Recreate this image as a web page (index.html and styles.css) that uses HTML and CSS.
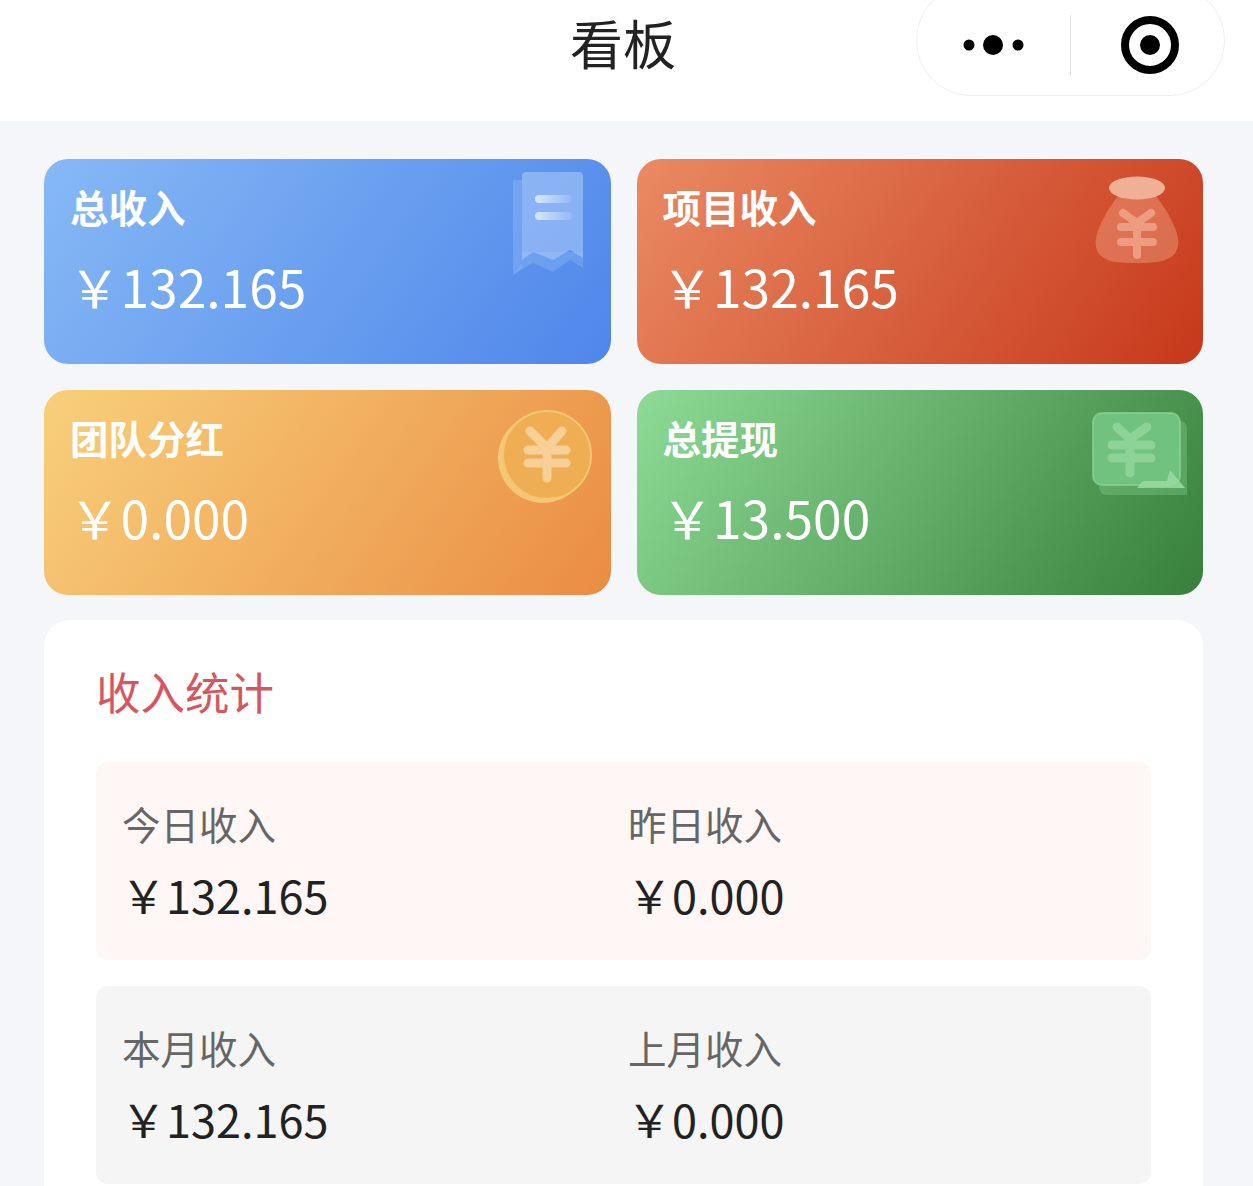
FILE: index.html
```html
<!DOCTYPE html>
<html lang="zh-CN">
<head>
    <meta charset="UTF-8">
    <meta name="viewport" content="width=device-width, initial-scale=1.0">
    <title>看板</title>
    <link rel="stylesheet" href="styles.css">
</head>
<body>

    <div class="header">
        <h1 class="page-title">看板</h1>
        <div class="capsule">
            <div class="capsule-btn">
                <svg width="62" height="24" viewBox="0 0 62 24"><circle cx="6" cy="12" r="5.5" fill="#000"/><circle cx="30" cy="12" r="10" fill="#000"/><circle cx="55" cy="12" r="5.5" fill="#000"/></svg>
            </div>
            <div class="capsule-btn">
                <svg width="58" height="58" viewBox="0 0 58 58"><circle cx="29" cy="29" r="25" fill="none" stroke="#000" stroke-width="8"/><circle cx="29" cy="29" r="10" fill="#000"/></svg>
            </div>
        </div>
    </div>

    <div class="cards">
        <div class="card card-blue">
            <p class="card-title">总收入</p>
            <p class="card-value">&#xFFE5;132.165</p>
            <svg class="card-icon icon-bill" width="72" height="106" viewBox="0 0 72 106">
                <defs>
                    <linearGradient id="billLine">
                        <stop offset="0" stop-color="#e8effd" stop-opacity=".85"/>
                        <stop offset="1" stop-color="#e8effd" stop-opacity=".1"/>
                    </linearGradient>
                </defs>
                <path d="M0 8H9V96L0 103Z" fill="#a4c9f9" fill-opacity=".3"/>
                <path d="M0 103L20 91L40 100L57 88L70 96V80H9V92Z" fill="#8fbcf6" fill-opacity=".35"/>
                <path d="M9 4Q9 0 13 0H66Q70 0 70 4V86L57 78L40 88L20 80L9 88Z" fill="#a6c8f8" fill-opacity=".6"/>
                <rect x="22" y="23" width="37" height="8" rx="4" fill="url(#billLine)"/>
                <rect x="22" y="40" width="37" height="8" rx="4" fill="url(#billLine)"/>
            </svg>
        </div>
        <div class="card card-red">
            <p class="card-title">项目收入</p>
            <p class="card-value">&#xFFE5;132.165</p>
            <svg class="card-icon icon-bag" width="86" height="90" viewBox="0 0 86 90">
                <path d="M24 20H60Q72 34 80 53Q90 78 70 85Q64 88 42 88Q18 88 13 85Q-6 78 4 53Q12 34 24 20Z" fill="#f3a78a" fill-opacity=".42"/>
                <ellipse cx="42" cy="13" rx="28" ry="11.5" fill="#f0b096"/>
                <path d="M28 38L42 48L56 38M26 52H58M26 67H58M42 48V80" fill="none" stroke="#f6b9a2" stroke-opacity=".6" stroke-width="8" stroke-linecap="round" stroke-linejoin="round"/>
            </svg>
        </div>
        <div class="card card-yellow">
            <p class="card-title">团队分红</p>
            <p class="card-value">&#xFFE5;0.000</p>
            <svg class="card-icon icon-coin" width="94" height="96" viewBox="0 0 94 96">
                <circle cx="45" cy="50" r="45" fill="#f9d987" fill-opacity=".7"/>
                <circle cx="49" cy="47" r="44" fill="#efae54" stroke="#f4c670" stroke-width="2"/>
                <path d="M32 23L49 40L64 23M30 42H68M30 55H68M49 40V70" fill="none" stroke="#f8d6a4" stroke-opacity=".85" stroke-width="9" stroke-linecap="round" stroke-linejoin="round"/>
            </svg>
        </div>
        <div class="card card-green">
            <p class="card-title">总提现</p>
            <p class="card-value">&#xFFE5;13.500</p>
            <svg class="card-icon icon-cash" width="97" height="84" viewBox="0 0 97 84">
                <path d="M12 8H86Q96 8 96 18V83H16Q8 83 8 74Z" fill="#7ecb87" fill-opacity=".4"/>
                <rect x="2" y="1" width="87" height="72" rx="9" fill="#70c27e" stroke="#8dd497" stroke-opacity=".7" stroke-width="2"/>
                <path d="M26 15L39 27L56 15M21 33H60M21 46H60M39 27V61" fill="none" stroke="#92d69b" stroke-opacity=".85" stroke-width="9" stroke-linecap="round" stroke-linejoin="round"/>
                <path d="M46 76L51 70Q52 69 55 69H76L79 58L94 76Z" fill="#9ad9a2" fill-opacity=".85"/>
            </svg>
        </div>
    </div>

    <div class="panel">
        <h2 class="panel-title">收入统计</h2>
        <div class="stat-box stat-pink">
            <div class="stat">
                <p class="stat-label">今日收入</p>
                <p class="stat-value">&#xFFE5;132.165</p>
            </div>
            <div class="stat">
                <p class="stat-label">昨日收入</p>
                <p class="stat-value">&#xFFE5;0.000</p>
            </div>
        </div>
        <div class="stat-box stat-grey">
            <div class="stat">
                <p class="stat-label">本月收入</p>
                <p class="stat-value">&#xFFE5;132.165</p>
            </div>
            <div class="stat">
                <p class="stat-label">上月收入</p>
                <p class="stat-value">&#xFFE5;0.000</p>
            </div>
        </div>
    </div>

</body>
</html>
```

FILE: styles.css
```css
html, body {
    height: 100%;
    overflow: hidden;
}

body {
    font-family: "Noto Sans CJK SC", "Noto Sans", sans-serif;
    background-color: #f5f6fa;
    margin: 0;
    padding: 0;
}

p, h1, h2 {
    margin: 0;
    font-weight: normal;
}

.header {
    height: 121px;
    background: white;
    display: flex;
    justify-content: center;
    align-items: flex-start;
    position: relative;
}

.page-title {
    font-size: 53px;
    line-height: 84px;
    margin-left: -7px;
    color: #222;
}

.capsule {
    position: absolute;
    top: -15px;
    left: 916px;
    width: 309px;
    height: 111px;
    box-sizing: border-box;
    border: 1px solid #efefef;
    border-radius: 55px;
    display: flex;
    align-items: center;
    padding-top: 9px;
}

.capsule-btn {
    flex: 1;
    height: 60px;
    display: flex;
    justify-content: center;
    align-items: center;
}

.capsule-btn:first-child {
    flex: none;
    width: 153px;
    height: 61px;
    border-right: 1px solid #e2e2e2;
}

.capsule-btn:last-child {
    padding-left: 5px;
}

.cards {
    display: grid;
    grid-template-columns: 1fr 1fr;
    grid-auto-rows: 205px;
    gap: 26px;
    padding: 38px 50px 0 44px;
}

.card {
    border-radius: 24px;
    color: white;
    padding: 20px 27px;
    position: relative;
    overflow: hidden;
}

.card-blue {
    background: linear-gradient(125deg, #86b9f5, #4f86ea);
}

.card-red {
    background: linear-gradient(125deg, #ea8a63, #c6381a);
}

.card-yellow {
    background: linear-gradient(125deg, #f8d07a, #ea8c43);
}

.card-green {
    background: linear-gradient(125deg, #8ddb96, #377f3a);
}

.card-title {
    font-size: 38.5px;
    line-height: 54px;
    font-weight: bold;
    margin-left: -1px;
}

.card-value {
    font-size: 51.5px;
    line-height: 72px;
    margin: 17px 0 0 -2px;
}

.card-icon {
    position: absolute;
    filter: blur(0.7px);
}

.icon-bill {
    top: 13px;
    left: 469px;
}

.icon-bag {
    top: 16px;
    left: 458px;
}

.icon-coin {
    top: 18px;
    left: 454px;
}

.icon-cash {
    top: 22px;
    left: 454px;
}

.panel {
    margin: 25px 50px 0 44px;
    padding: 38px 52px 26px;
    background: white;
    border-radius: 26px;
}

.panel-title {
    font-size: 44.5px;
    line-height: 66px;
    color: #d6565f;
    margin-bottom: 38px;
}

.stat-box {
    height: 198px;
    box-sizing: border-box;
    border-radius: 12px;
    padding: 33px 26px 0;
    display: grid;
    grid-template-columns: 506px 1fr;
    margin-bottom: 26px;
}

.stat-pink {
    background: #fef7f5;
}

.stat-grey {
    background: #f5f5f6;
}

.stat-label {
    font-size: 38.5px;
    line-height: 56px;
    color: #666;
}

.stat-value {
    font-size: 45px;
    line-height: 64px;
    margin: 12px 0 0 -1px;
    color: #222;
}
```
